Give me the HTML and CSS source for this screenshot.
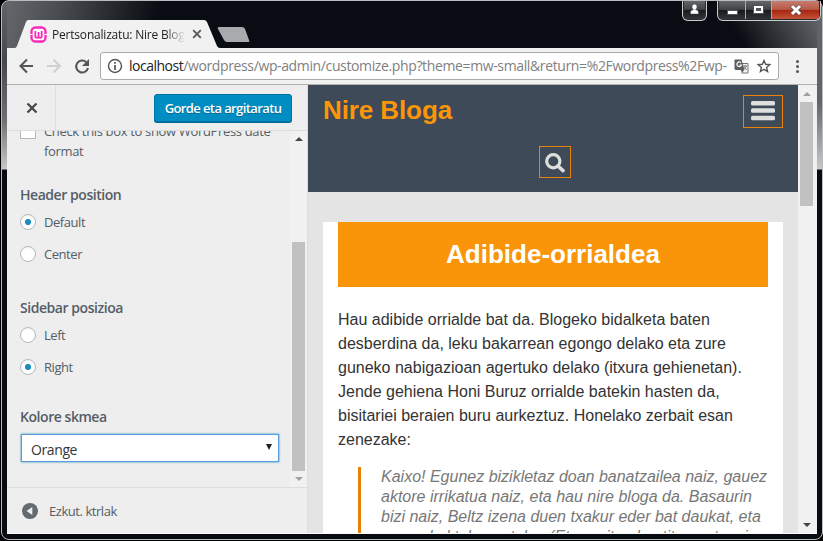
FILE: index.html
```html
<!DOCTYPE html>
<html lang="eu">
<head>
<meta charset="utf-8">
<title>Pertsonalizatu: Nire Bloga</title>
<link rel="stylesheet" href="styles.css">
</head>
<body>
<div class="window">
  <div class="window-controls">
    <div class="control-group"><span class="control user"><svg width="21" height="17" viewBox="0 0 21 17"><path d="M6.500 13v-2q0-2 3-2.300Q7.500 7.500 8 5q1-2 2.500-2T13 5q.5 2.500-1.500 3.700 3 .3 3 2.300v2z" fill="#fff" stroke="#444" stroke-width=".5"/></svg></span></div>
    <div class="control-group trio">
      <span class="control min"><svg width="26" height="17"><rect x="8.500" y="9.500" width="10" height="4" fill="#fff" stroke="#555"/></svg></span>
      <span class="control max"><svg width="25" height="17"><rect x="7.500" y="4.500" width="10" height="8" fill="#fff" stroke="#555"/><rect x="10" y="7" width="5" height="3" fill="#555"/></svg></span>
      <span class="control close"><svg width="47" height="17"><path d="M19.500 5 28.500 13M28.500 5 19.500 13" stroke="#63504c" stroke-width="4.500"/><path d="M20 5 28 13M28 5 20 13" stroke="#fff" stroke-width="3"/></svg></span>
    </div>
  </div>
  <div class="tab-strip">
    <svg class="tab-shape" width="240" height="29" viewBox="0 0 240 29"><path d="M-7 29v-1h1q1 0 2-2L5 2q1-2 2-2h176q2 0 3 2l10 24q1 2 3 2h1v1z" fill="#f1f1f1"/><path d="M198 7h23q2 0 3 2l4 11q1 2-1 2h-21q-2 0-3-2l-6-11q-1-2 1-2z" fill="#a8aaad"/></svg>
    <div class="tab">
      <svg class="favicon" width="17" height="17" viewBox="0 0 17 17"><rect x="1.500" y="1.500" width="14" height="14" rx="4" fill="#fff" stroke="#fa28b4" stroke-width="2.300"/><path d="M0 8.500h2.500m12 0H17" stroke="#fff" stroke-width="1"/><path d="M5.300 5v5q0 1.800 1.600 1.800 1.600 0 1.600-1.800V6v4q0 1.800 1.600 1.800 1.600 0 1.600-1.800V5" fill="none" stroke="#fa28b4" stroke-width="1.800"/></svg>
      <span class="tab-title">Pertsonalizatu: Nire Bloga</span>
      <svg class="tab-close" width="10" height="10" viewBox="0 0 10 10"><path d="m1.200 1.200 7.600 7.600m0-7.600L1.200 8.800" stroke="#5a5a5a" stroke-width="1.900"/></svg>
    </div>
  </div>
  <div class="toolbar">
    <svg width="88" height="36" viewBox="0 0 88 36" fill="none" stroke-width="2.100"><path d="M26 18H13.500m6.500-6.500L13.500 18l6.500 6.500" stroke="#555"/><path d="M40 18h13m-6.500-6.500L53 18l-6.500 6.500" stroke="#d0d0d0"/><path d="M79.200 14A6 6 0 1 0 81 20" stroke="#555"/><path d="M82 11v7h-7z" fill="#555"/></svg>
    <div class="address">
      <svg class="info" width="16" height="16" viewBox="0 0 16 16"><circle cx="8" cy="8" r="6.500" fill="none" stroke="#555" stroke-width="1.400"/><path d="M8 7v5M8 4v1.700" stroke="#555" stroke-width="1.700"/></svg>
      <span class="url"><span class="host">localhost</span><span class="path">/wordpress/wp-admin/customize.php?theme=mw-small&amp;return=%2Fwordpress%2Fwp-</span></span>
      <svg class="translate" width="15" height="15" viewBox="0 0 15 15"><path d="M6 4.500h8v9.500H7.500" fill="#f4f4f4" stroke="#777"/><path d="M1 .5h6.500L10.500 11H1.500L.5 10V1z" fill="#5c5c5c"/><path d="M7 3.800a2.300 2.300 0 1 0 .4 2.200H5.500" fill="none" stroke="#fff" stroke-width="1.200"/><path d="M9.500 7H13M11 6v1m1.500 0q-1 2.500-2.500 3.500m0-2.500 2.800 3" fill="none" stroke="#777" stroke-width=".9"/><path d="M7 11h3l-2 3z" fill="#555"/></svg>
      <svg class="star" width="14" height="14" viewBox="0 0 14 14"><path d="m7 1.500 1.600 3.800 4.200.4-3.200 2.700 1 4.100L7 10.300l-3.600 2.200 1-4.100L1.200 5.700l4.200-.4z" fill="none" stroke="#555" stroke-width="1.400"/></svg>
    </div>
    <div class="menu-dots"><i></i><i></i><i></i></div>
  </div>
  <div class="viewport">
    <aside class="customizer">
      <header class="customizer-head">
        <span class="dismiss"><svg width="12" height="12" viewBox="0 0 12 12"><path d="m1.500 1.500 9 9m0-9-9 9" stroke="#444" stroke-width="2.200"/></svg></span>
        <button class="save">Gorde eta argitaratu</button>
      </header>
      <div class="customizer-body">
        <form class="controls">
          <label class="check-row"><span class="checkbox"></span><span>Check this box to show WordPress date<br>format</span></label>
          <h3 class="group-title header-title">Header position</h3>
          <label class="option"><span class="radio on"></span>Default</label>
          <label class="option"><span class="radio"></span>Center</label>
          <h3 class="group-title sidebar-title">Sidebar posizioa</h3>
          <label class="option"><span class="radio"></span>Left</label>
          <label class="option"><span class="radio on"></span>Right</label>
          <h3 class="group-title scheme-title">Kolore skmea</h3>
          <div class="select"><span>Orange</span><i class="select-arrow"></i></div>
        </form>
        <div class="scrollbar panel-scroll"><i class="arrow up dark"></i><b class="thumb"></b><i class="arrow down"></i></div>
      </div>
      <footer class="customizer-foot"><svg width="16" height="16" viewBox="0 0 16 16"><circle cx="8" cy="8" r="8" fill="#656a6f"/><path d="M10.300 4v8L4.500 8z" fill="#eee"/></svg><span>Ezkut. ktrlak</span></footer>
    </aside>
    <main class="preview">
      <header class="site-head">
        <div class="brand-row"><h1>Nire Bloga</h1><span class="burger"><svg width="24" height="20" viewBox="0 0 24 20" fill="#dedede"><rect width="24" height="4.500" rx="1.500"/><rect y="7.300" width="24" height="4.500" rx="1.500"/><rect y="14.700" width="24" height="4.500" rx="1.500"/></svg></span></div>
        <span class="search"><svg width="20" height="20" viewBox="0 0 20 20" fill="none" stroke="#dedede"><circle cx="8.300" cy="8.300" r="6.600" stroke-width="3.200"/><path d="m13 13 5 4.600" stroke-width="3.600" stroke-linecap="round"/></svg></span>
      </header>
      <article class="post">
        <h2>Adibide-orrialdea</h2>
        <p>Hau adibide orrialde bat da. Blogeko bidalketa baten<br>desberdina da, leku bakarrean egongo delako eta zure<br>guneko nabigazioan agertuko delako (itxura gehienetan).<br>Jende gehiena Honi Buruz orrialde batekin hasten da,<br>bisitariei beraien buru aurkeztuz. Honelako zerbait esan<br>zenezake:</p>
        <blockquote>Kaixo! Egunez bizikletaz doan banatzailea naiz, gauez<br>aktore irrikatua naiz, eta hau nire bloga da. Basaurin<br>bizi naiz, Beltz izena duen txakur eder bat daukat, eta<br>pozoa koktela gustoko. (Eta euritan bustitzea atsegin</blockquote>
      </article>
    </main>
    <div class="scrollbar page-scroll"><i class="arrow up"></i><b class="thumb"></b><i class="arrow down dark"></i></div>
  </div>
</div>
</body>
</html>
```
FILE: styles.css
```css
* { box-sizing: border-box; }
body { margin: 0; background: #000; overflow: hidden; font-family: "Open Sans", "Noto Sans", sans-serif; }
h1, h2, h3, p, blockquote { margin: 0; }
svg { display: block; flex: none; }

.window {
  position: relative;
  width: 822px; height: 540px; margin-left: 1px;
  border: 1px solid #b9bcbf; border-radius: 8px;
  padding: 0 5px 5px;
  background:
    linear-gradient(#60646a, #45484d 60px, #6f7174 120px, #c8c8c8 168px, transparent 169px) left top / 5px 100% no-repeat,
    linear-gradient(#60646a, #606467 100px, #c8c8c8 168px, transparent 169px) right top / 5px 100% no-repeat,
    linear-gradient(60deg, transparent 50%, #5e6266 92%) right top / 180px 48px no-repeat,
    linear-gradient(100deg, #66696c, #4a4e52 55px, #090d13 155px) left top / 100% 48px no-repeat,
    #080c12;
}
.window-controls { position: absolute; top: 0; right: 1px; display: flex; gap: 10px; }
.control-group { display: flex; height: 20px; border: 1px solid #c9cbcd; border-top: 0; border-radius: 0 0 6px 6px; overflow: hidden; background: #292b2d; padding: 0 1px 1px; }
.control { display: block; height: 18px; background: linear-gradient(#64676a, #414345 47%, #171a1d 50%, #303438); border-right: 1px solid #aaa; }
.user, .close { border-right: 0; }
.control.close { background: linear-gradient(#c77c70, #b85949 47%, #a52311 50%, #c45438); }

.tab-strip { position: relative; height: 47px; padding: 19px 0 0 8px; }
.tab-shape { position: absolute; left: 14px; top: 19px; overflow: visible; }
.tab { position: relative; display: flex; align-items: center; height: 28px; padding-left: 15px; }
.tab-title { width: 134px; margin-left: 5px; overflow: hidden; white-space: nowrap; font-size: 12px; letter-spacing: -.2px; color: #222; -webkit-mask-image: linear-gradient(90deg, #000 113px, transparent 133px); }
.tab-close { margin-left: 6px; }

.toolbar { display: flex; align-items: center; height: 37px; background: #f1f1f1; border-bottom: 1px solid #b0b0b0; }
.address { display: flex; align-items: center; width: 679px; height: 28px; margin-left: 5px; background: #fff; border: 1px solid #aaa; border-radius: 3px; padding: 0 7px 0 6px; }
.url { width: 601px; margin: 0 0 1px 6px; white-space: nowrap; font-size: 14px; color: #808080; }
.host { color: #222; letter-spacing: -.5px; }
.path { letter-spacing: -.37px; }
.translate { margin-left: 5px; }
.star { margin-left: 8px; }
.menu-dots { display: grid; gap: 2px; margin-left: 17px; }
.menu-dots i { width: 3px; height: 3px; border-radius: 50%; background: #555; }

.viewport { display: flex; height: 449px; background: #eee; border-bottom: 1px solid #fafafa; }
.customizer { display: flex; flex-direction: column; width: 301px; background: #eee; border-right: 1px solid #ddd; color: #555d66; }
.customizer-head { display: flex; justify-content: space-between; align-items: center; height: 46px; border-bottom: 1px solid #ddd; padding-right: 15px; }
.dismiss { display: flex; align-items: center; width: 49px; height: 45px; padding-left: 19px; border-right: 1px solid #ddd; }
.save { width: 138px; height: 28px; margin-top: 1px; padding: 0; background: #008ec2; border: 1px solid #0073a5; border-radius: 3px; box-shadow: 0 1px 0 #006799; color: #fff; font: 600 13px "Open Sans", sans-serif; letter-spacing: -.6px; white-space: nowrap; text-shadow: 0 1px 1px #006799; }
.customizer-body { display: flex; height: 356px; overflow: hidden; }
.controls { width: 283px; padding: 0 11px 0 13px; font-size: 13px; }
.check-row { display: flex; gap: 8px; height: 55px; margin-top: -9px; line-height: 19.500px; white-space: nowrap; letter-spacing: -.34px; }
.checkbox { width: 16px; height: 16px; margin-top: 1px; background: #fff; border: 1px solid #b4b9be; flex: none; }
.group-title { height: 23px; font-size: 14px; font-weight: 600; line-height: 24px; white-space: nowrap; letter-spacing: -.45px; }
.header-title { margin-top: 6px; }
.option { display: flex; align-items: center; gap: 8px; height: 32px; letter-spacing: -.45px; }
.radio { width: 16px; height: 16px; background: #fff; border: 1px solid #b4b9be; border-radius: 50%; box-shadow: inset 0 1px 2px #0001; }
.radio.on { background: radial-gradient(circle, #1e8cbe 2.700px, #fff 3.500px); }
.sidebar-title { margin-top: 26px; }
.scheme-title { margin-top: 22px; }
.select { display: flex; align-items: center; justify-content: space-between; height: 28px; margin: 6px 0 0 1px; width: 258px; padding: 2px 6px 0 9px; background: #fff; border: 1px solid #5b9dd9; box-shadow: 0 0 2px #1e8cbe; color: #32373c; font-size: 14px; letter-spacing: -.4px; }
.select-arrow { margin-top: -4px; border: solid transparent; border-width: 6px 3px 0; border-top-color: #222; }
.customizer-foot { display: flex; align-items: center; gap: 11px; height: 46px; border-top: 1px solid #ddd; padding-left: 15px; font-size: 13px; letter-spacing: -.45px; }

.scrollbar { display: flex; flex-direction: column; align-items: center; background: #f1f1f1; }
.arrow { border: solid transparent; border-width: 0 4px 4px; border-bottom-color: #a0a0a0; }
.arrow.down { border-width: 4px 4px 0; border-top-color: #a0a0a0; }
.arrow.up.dark { border-bottom-color: #444; }
.arrow.down.dark { border-top-color: #444; }
.thumb { width: 13px; background: #c1c1c1; }
.panel-scroll { width: 17px; padding: 6px 0; }
.panel-scroll .thumb { height: 229px; margin: 101px 0 6px; }
.page-scroll { width: 18px; padding: 7px 1px 6px 0; }
.page-scroll .thumb { height: 104px; margin: 6px 0 auto; }

.preview { width: 490px; overflow: hidden; background: #e4e4e4; font-family: "Liberation Sans", Arial, sans-serif; }
.site-head { display: flex; flex-direction: column; height: 107px; padding: 10px 15px 0; background: #3f4a58; }
.brand-row { display: flex; justify-content: space-between; height: 51px; }
h1 { font-size: 26px; line-height: 30px; letter-spacing: -.1px; color: #fb9608; }
.burger { display: flex; justify-content: center; width: 40px; height: 33px; padding-top: 5px; border: 1px solid #e88305; }
.search { display: grid; place-items: center; align-self: center; width: 32px; height: 32px; margin-left: 4px; padding: 2px 0 0; border: 1px solid #e88305; }
.post { width: 460px; height: 400px; margin: 30px 15px 0; padding: 0 15px; background: #fff; }
h2 { height: 65px; background: #fa9408; color: #fff; font-size: 26px; line-height: 64px; text-align: center; }
.post p { margin-top: 21px; font-size: 16px; line-height: 24px; color: #333; white-space: nowrap; }
blockquote { margin: 15px 0 0 20px; padding-left: 20px; border-left: 3px solid #e58305; color: #777; font-size: 16px; font-style: italic; line-height: 20px; white-space: nowrap; }
```
